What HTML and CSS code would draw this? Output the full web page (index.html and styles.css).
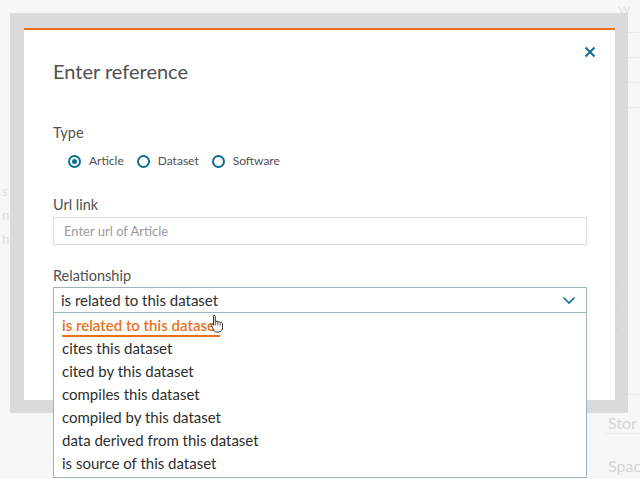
FILE: index.html
```html
<!DOCTYPE html>
<html>
<head>
<meta charset="utf-8">
<link rel="stylesheet" href="styles.css">
</head>
<body>
<div class="page">
  <div class="bg-right">
    <div class="bg-top">W</div>
    <div class="bg-line"></div>
    <div class="bg-line"></div>
    <div class="bg-line"></div>
    <div class="bg-line"></div>
    <div class="bg-txt se">se</div>
    <div class="bg-txt c">C</div>
    <div class="bg-txt sm">n</div>
    <div class="bg-txt sm">D</div>
    <div class="bg-txt sm">m</div>
    <div class="bg-dot"></div>
    <div class="bg-line low"></div>
    <div class="bg-txt big">Stor</div>
    <div class="bg-line mid"></div>
    <div class="bg-txt big">Spac</div>
  </div>
  <div class="bg-left">
    <div class="bg-txt">s</div>
    <div class="bg-txt">n</div>
    <div class="bg-txt">h</div>
  </div>
</div>

<div class="overlay">
  <div class="modal">
    <div class="head">
      <h1 class="title">Enter reference</h1>
      <button class="close" aria-label="Close">
        <svg width="12" height="12" viewBox="0 0 12 12"><path d="M1.5 1.5L10.5 10.5M10.5 1.5L1.5 10.5" stroke="#0a6f90" stroke-width="2" fill="none"/></svg>
      </button>
    </div>
    <div class="field">
      <div class="label">Type</div>
      <div class="radios">
        <label class="radio"><span class="dot on"></span>Article</label>
        <label class="radio"><span class="dot"></span>Dataset</label>
        <label class="radio"><span class="dot"></span>Software</label>
      </div>
    </div>
    <div class="field">
      <div class="label">Url link</div>
      <div class="input">Enter url of Article</div>
    </div>
    <div class="field">
      <div class="label">Relationship</div>
      <div class="select">
        <span>is related to this dataset</span>
        <svg width="14" height="9" viewBox="0 0 14 9"><path d="M1.5 1.5L7 7L12.5 1.5" stroke="#0a6f90" stroke-width="1.6" fill="none"/></svg>
        <ul class="menu">
          <li class="active"><span>is related to this dataset</span></li>
          <li>cites this dataset</li>
          <li>cited by this dataset</li>
          <li>compiles this dataset</li>
          <li>compiled by this dataset</li>
          <li>data derived from this dataset</li>
          <li>is source of this dataset</li>
        </ul>
        <svg class="cursor" width="14" height="19" viewBox="0 0 14 19"><path d="M4 1.2c.8 0 1.3.6 1.3 1.3v5.3c.3-.6 2.3-.6 2.5.3.3-.6 2.2-.6 2.4.4.4-.5 2.3-.4 2.3.9v4.3c0 2.3-1.6 4.3-3.8 4.3H6.4c-1.1 0-1.8-.7-2.5-1.6L1.2 11.3c-.6-.8.6-1.900 1.4-1.1l.9 1V2.5c0-.7.3-1.3.5-1.3z" fill="#fff" stroke="#333" stroke-width="1"/><path d="M7.8 8.2v3.3M10.2 8.6v3M5.3 7.8v3.6" stroke="#333" stroke-width=".8"/></svg>
      </div>
    </div>
  </div>
</div>
</body>
</html>
```

FILE: styles.css
```css
* { box-sizing: border-box; }
html, body { margin: 0; padding: 0; }
body {
  width: 640px;
  height: 479px;
  overflow: hidden;
  background: #f7f7f7;
  font-family: Lato, "Noto Sans", sans-serif;
  position: relative;
}
.page {
  display: flex;
  justify-content: space-between;
  height: 479px;
}
.bg-left {
  padding-top: 183px;
  padding-left: 2px;
  display: flex;
  flex-direction: column;
  gap: 8px;
  order: 0;
}
.bg-right {
  order: 1;
  width: 36px;
  padding-top: 2px;
  display: flex;
  flex-direction: column;
  color: #dcdcdc;
}
.bg-top { font-size: 12px; padding-left: 14px; color: #e4e4e4; height: 30px; }
.bg-line { height: 1px; background: #ececec; margin-bottom: 24px; }
.bg-line.low { margin-top: 60px; margin-bottom: 20px; }
.bg-line.mid { margin-bottom: 24px; }
.bg-txt { font-size: 13px; color: #e0e0e0; line-height: 16px; }
.bg-txt.se { margin-top: 50px; font-size: 16px; }
.bg-txt.c { margin-top: 28px; font-size: 16px; color: #c8c8c8; }
.bg-txt.sm { margin-top: 8px; font-size: 11px; padding-left: 6px; }
.bg-txt.big { font-size: 16px; color: #d4d4d4; padding-left: 4px; margin-bottom: 2px; }
.bg-dot { width: 10px; height: 10px; border-radius: 50%; background: #e0e0e0; margin-top: 10px; margin-left: 5px; }

.overlay {
  position: absolute;
  left: 10px;
  top: 13px;
  width: 618px;
  height: 400px;
  background: rgba(214, 214, 214, 0.9);
  padding: 15px 13px 13px 14px;
}
.modal {
  background: #fff;
  height: 100%;
  border-top: 2px solid #e9711c;
  padding: 0 28px 0 29px;
}
.head {
  display: flex;
  justify-content: space-between;
  align-items: flex-start;
}
.title {
  margin: 29px 0 0 0;
  font-size: 20px;
  line-height: 24px;
  font-weight: 400;
  color: #505050;
}
.close {
  border: 0;
  background: none;
  padding: 0;
  margin: 16px -9px 0 0;
  width: 12px;
  height: 12px;
  display: flex;
}
.field { display: flex; flex-direction: column; }
.label {
  font-size: 14.5px;
  line-height: 18px;
  color: #505050;
}
.field:nth-of-type(2) { margin-top: 41px; }
.field:nth-of-type(3) { margin-top: 27px; }
.field:nth-of-type(4) { margin-top: 22px; }
.radios {
  display: flex;
  gap: 13px;
  margin-top: 11px;
  padding-left: 15px;
}
.radio {
  display: flex;
  align-items: center;
  font-size: 12px;
  line-height: 16px;
  color: #505050;
  gap: 8px;
}
.dot {
  width: 13px;
  height: 13px;
  border: 2px solid #0a6f90;
  border-radius: 50%;
  display: flex;
  align-items: center;
  justify-content: center;
}
.dot.on::after {
  content: "";
  width: 5px;
  height: 5px;
  border-radius: 50%;
  background: #0a6f90;
}
.input {
  margin-top: 3px;
  height: 28px;
  border: 1px solid #dcdcdc;
  padding: 0 10px;
  font-size: 13px;
  line-height: 26px;
  color: #9a9a9a;
}
.select {
  position: relative;
  margin-top: 2px;
  height: 26px;
  border: 1px solid #9fb4c2;
  padding: 0 10px 0 7px;
  display: flex;
  align-items: center;
  justify-content: space-between;
  font-size: 15px;
  color: #2e2e2e;
}
.menu {
  position: absolute;
  left: -1px;
  right: -1px;
  top: 24px;
  margin: 0;
  padding: 1px 0 1px 0;
  list-style: none;
  background: #fff;
  border: 1px solid #9fb4c2;
  height: 166px;
}
.menu li {
  height: 23px;
  line-height: 22px;
  padding-left: 8px;
  font-size: 15px;
  color: #2e2e2e;
}
.menu li.active span {
  color: #e9711c;
  font-weight: 600;
  display: inline-block;
  line-height: 20px;
  border-bottom: 2px solid #e9711c;
}
.cursor {
  position: absolute;
  left: 156px;
  top: 26px;
}
```
